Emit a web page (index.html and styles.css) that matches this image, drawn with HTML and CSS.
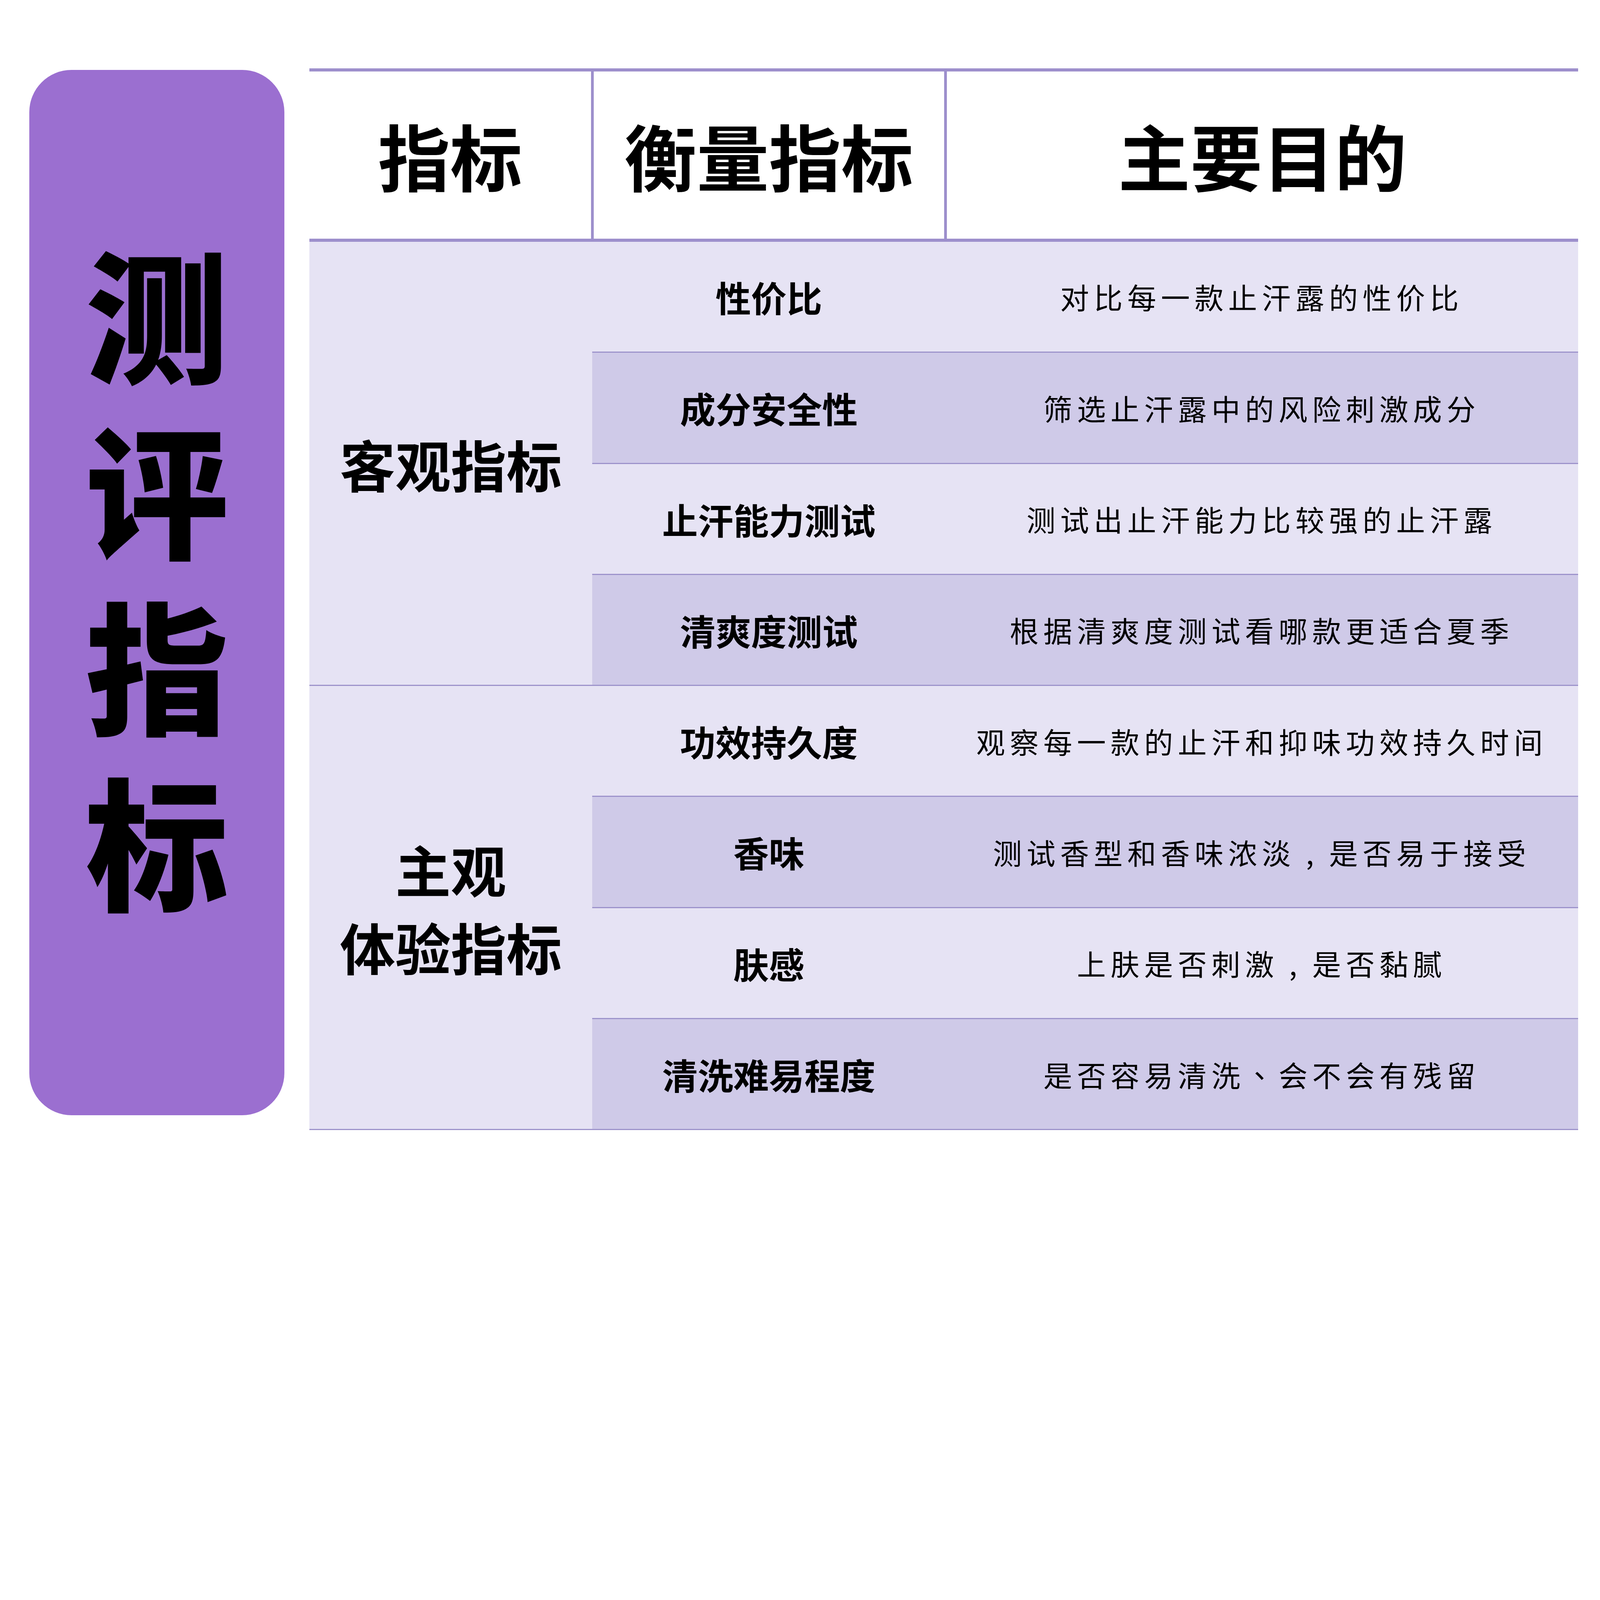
FILE: index.html
```html
<!DOCTYPE html>
<html lang="zh-CN">
<head>
<meta charset="utf-8">
<title>测评指标</title>
<link rel="stylesheet" href="styles.css">
</head>
<body>
<div class="page">
  <div class="pill">
    <div class="pill-text">测评指标</div>
  </div>
  <div class="table">
    <div class="head">
      <div class="hcell c1">指标</div>
      <div class="hcell c2 div">衡量指标</div>
      <div class="hcell c3 div">主要目的</div>
    </div>
    <div class="group">
      <div class="glabel">客观指标</div>
      <div class="rows">
        <div class="row"><div class="name">性价比</div><div class="desc">对比每一款止汗露的性价比</div></div>
        <div class="row dark"><div class="name">成分安全性</div><div class="desc">筛选止汗露中的风险刺激成分</div></div>
        <div class="row"><div class="name">止汗能力测试</div><div class="desc">测试出止汗能力比较强的止汗露</div></div>
        <div class="row dark last"><div class="name">清爽度测试</div><div class="desc">根据清爽度测试看哪款更适合夏季</div></div>
      </div>
    </div>
    <div class="group">
      <div class="glabel two">主观<br>体验指标</div>
      <div class="rows">
        <div class="row"><div class="name">功效持久度</div><div class="desc">观察每一款的止汗和抑味功效持久时间</div></div>
        <div class="row dark"><div class="name">香味</div><div class="desc">测试香型和香味浓淡<span class="comma">,</span>是否易于接受</div></div>
        <div class="row"><div class="name">肤感</div><div class="desc">上肤是否刺激<span class="comma">,</span>是否黏腻</div></div>
        <div class="row dark last"><div class="name">清洗难易程度</div><div class="desc">是否容易清洗<span class="punct">、</span>会不会有残留</div></div>
      </div>
    </div>
  </div>
</div>
</body>
</html>
```

FILE: styles.css
```css
:root {
  --u: calc(100vw / 5760);
}
html, body {
  margin: 0;
  padding: 0;
  background: #ffffff;
  overflow: hidden;
}
body {
  width: 100vw;
  height: calc(4320 * var(--u));
  font-family: "Noto Sans CJK SC", "Noto Sans", sans-serif;
  color: #000;
}
.page {
  display: flex;
  align-items: flex-start;
  padding: calc(246 * var(--u)) 0 0 calc(106 * var(--u));
  gap: calc(90 * var(--u));
}
.pill {
  width: calc(918 * var(--u));
  height: calc(3763 * var(--u));
  margin-top: calc(6 * var(--u));
  background: #9b6fd0;
  border-radius: calc(152 * var(--u));
  display: flex;
  align-items: center;
  justify-content: center;
  box-sizing: border-box;
  padding-top: calc(39 * var(--u));
  flex: none;
}
.pill-text {
  writing-mode: vertical-rl;
  text-orientation: upright;
  font-size: calc(515 * var(--u));
  line-height: 1;
  letter-spacing: calc(118 * var(--u));
  font-weight: 900;
}
.table {
  width: calc(4567 * var(--u));
  flex: none;
  display: flex;
  flex-direction: column;
}
.head {
  display: grid;
  grid-template-columns: calc(1013 * var(--u)) calc(1272 * var(--u)) calc(2282 * var(--u));
  height: calc(624 * var(--u));
  box-sizing: border-box;
  border-top: calc(12 * var(--u)) solid #9d8fcc;
  border-bottom: calc(12 * var(--u)) solid #9d8fcc;
  background: #ffffff;
}
.hcell {
  display: flex;
  align-items: center;
  justify-content: center;
  font-size: calc(260 * var(--u));
  line-height: 1;
  font-weight: 700;
  box-sizing: border-box;
}
.hcell.div {
  border-left: calc(10 * var(--u)) solid #9d8fcc;
}
.group {
  display: grid;
  grid-template-columns: calc(1018 * var(--u)) calc(3549 * var(--u));
  background: #e6e3f4;
  border-bottom: calc(5 * var(--u)) solid #9d93cb;
}
.glabel {
  display: flex;
  align-items: center;
  justify-content: center;
  text-align: center;
  font-size: calc(200 * var(--u));
  line-height: 1;
  font-weight: 700;
}
.glabel.two {
  line-height: calc(280 * var(--u));
}
.rows {
  display: flex;
  flex-direction: column;
}
.row {
  display: grid;
  grid-template-columns: calc(1272 * var(--u)) calc(2277 * var(--u));
  height: calc(400 * var(--u));
  box-sizing: border-box;
  border-bottom: calc(5 * var(--u)) solid #9d93cb;
}
.row.last {
  height: calc(395 * var(--u));
  border-bottom: none;
}
.row.dark {
  background: #cfcae8;
}
.name {
  display: flex;
  align-items: center;
  justify-content: center;
  font-size: calc(128 * var(--u));
  line-height: 1;
  font-weight: 700;
}
.desc {
  display: flex;
  align-items: center;
  justify-content: center;
  font-size: calc(104 * var(--u));
  line-height: 1;
  font-weight: 400;
  letter-spacing: calc(17 * var(--u));
  white-space: nowrap;
}
.comma {
  display: inline-block;
  width: 1em;
  text-align: center;
  letter-spacing: 0;
  margin-right: calc(17 * var(--u));
  font-weight: 400;
}
.punct {
  font-family: "Noto Sans CJK TC", "Noto Sans CJK SC", sans-serif;
}
```
